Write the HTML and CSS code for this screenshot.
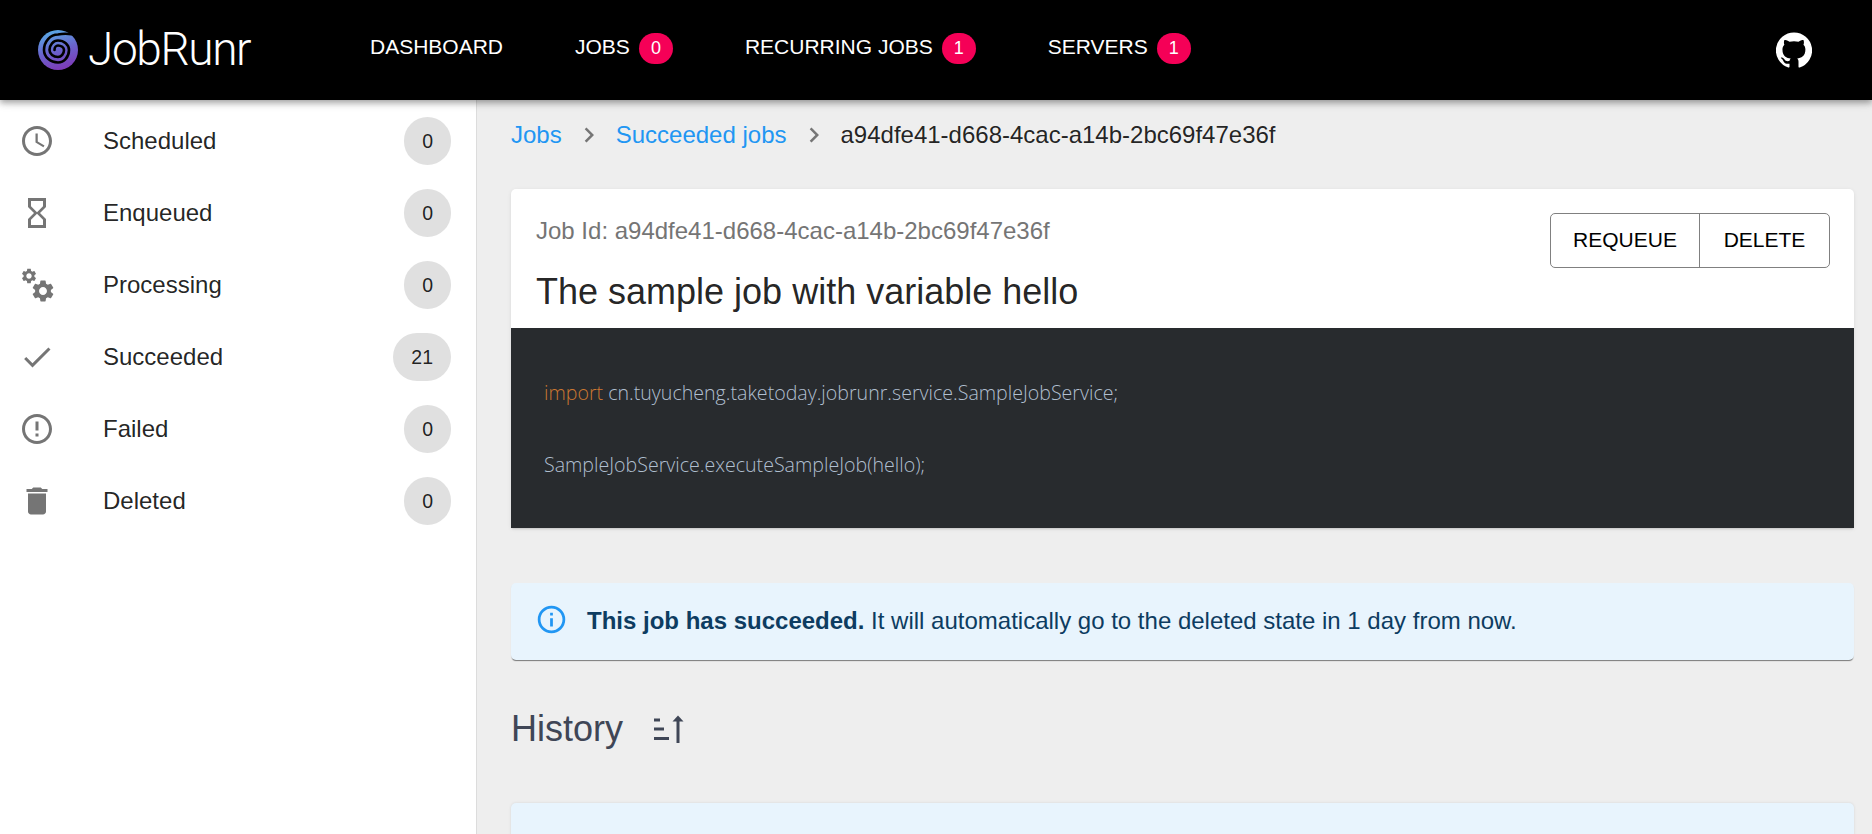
FILE: index.html
```html
<!DOCTYPE html>
<html lang="en">
<head>
<meta charset="utf-8">
<title>JobRunr</title>
<link rel="stylesheet" href="styles.css">
</head>
<body>
<header class="appbar">
  <a class="logo">
    <svg class="logo-mark" viewBox="0 0 40 40">
      <defs><linearGradient id="lg" x1="0.2" y1="0" x2="0.5" y2="1"><stop offset="0" stop-color="#58b0e8"/><stop offset="0.55" stop-color="#6a62cc"/><stop offset="1" stop-color="#7d3cb8"/></linearGradient></defs>
      <circle cx="20" cy="20" r="20" fill="url(#lg)"/>
      <path class="logo-cut" d="M42 6 Q30 2.6 20 4.5 A14 15.5 0 0 0 6 20 A14 12.5 0 0 0 20 32.5 A11 12.5 0 0 0 31 20 A11 9.5 0 0 0 20 10.5 A8.5 9.5 0 0 0 11.5 20 A8.5 7 0 0 0 20 27 A6 7 0 0 0 26 20 A6 4.5 0 0 0 20 15.5 A3.5 4.5 0 0 0 16.5 20"/>
    </svg>
    <span class="logo-text">JobRunr</span>
  </a>
  <nav class="nav">
    <a class="nav-item">DASHBOARD</a>
    <a class="nav-item">JOBS <span class="nav-badge">0</span></a>
    <a class="nav-item">RECURRING JOBS <span class="nav-badge">1</span></a>
    <a class="nav-item">SERVERS <span class="nav-badge">1</span></a>
  </nav>
  <a class="github">
    <svg viewBox="0 0 24 24"><path d="M12 .3a12 12 0 0 0-3.8 23.4c.6.1.8-.3.8-.6v-2c-3.3.7-4-1.6-4-1.6-.6-1.4-1.4-1.8-1.4-1.8-1-.7.1-.7.1-.7 1.2 0 1.9 1.2 1.9 1.2 1 1.8 2.8 1.3 3.5 1 0-.8.4-1.3.7-1.6-2.7-.3-5.5-1.3-5.5-6 0-1.2.5-2.3 1.3-3.1-.2-.4-.6-1.6 0-3.2 0 0 1-.3 3.4 1.2a11.5 11.5 0 0 1 6 0c2.3-1.5 3.3-1.2 3.3-1.2.6 1.6.2 2.8 0 3.2.9.8 1.3 1.9 1.3 3.2 0 4.6-2.8 5.6-5.5 5.9.5.4.9 1 .9 2.2v3.3c0 .3.1.7.8.6A12 12 0 0 0 12 .3"/></svg>
  </a>
</header>
<div class="shell">
  <aside class="drawer">
    <ul class="menu">
      <li class="menu-item">
        <svg class="menu-icon" viewBox="0 0 24 24"><path d="M11.99 2C6.47 2 2 6.48 2 12s4.47 10 9.99 10C17.52 22 22 17.52 22 12S17.52 2 11.99 2zM12 20c-4.42 0-8-3.58-8-8s3.58-8 8-8 8 3.58 8 8-3.58 8-8 8zm.5-13H11v6l5.25 3.15.75-1.23-4.5-2.67z"/></svg>
        <span class="menu-label">Scheduled</span><span class="count">0</span>
      </li>
      <li class="menu-item">
        <svg class="menu-icon" viewBox="0 0 24 24"><path d="M6 2v6h.01L6 8.01 10 12l-4 4 .01.01H6V22h12v-5.99h-.01L18 16l-4-4 4-3.99-.01-.01H18V2H6zm10 14.5V20H8v-3.5l4-4 4 4zm-4-5l-4-4V4h8v3.5l-4 4z"/></svg>
        <span class="menu-label">Enqueued</span><span class="count">0</span>
      </li>
      <li class="menu-item">
        <svg class="menu-icon" viewBox="0 0 36 36">
          <path transform="translate(10.8 10.8) scale(1.1)" d="M19.14 12.94c.04-.3.06-.61.06-.94 0-.32-.02-.64-.07-.94l2.03-1.58c.18-.14.23-.41.12-.61l-1.92-3.32c-.12-.22-.37-.29-.59-.22l-2.39.96c-.5-.38-1.03-.7-1.62-.94l-.36-2.54c-.04-.24-.24-.41-.48-.41h-3.84c-.24 0-.43.17-.47.41l-.36 2.54c-.59.24-1.13.57-1.62.94l-2.39-.96c-.22-.08-.47 0-.59.22L2.74 8.87c-.12.21-.08.47.12.61l2.03 1.58c-.05.3-.09.63-.09.94s.02.64.07.94l-2.03 1.58c-.18.14-.23.41-.12.61l1.92 3.32c.12.22.37.29.59.22l2.39-.96c.5.38 1.03.7 1.62.94l.36 2.54c.05.24.24.41.48.41h3.84c.24 0 .44-.17.47-.41l.36-2.54c.59-.24 1.13-.56 1.62-.94l2.39.96c.22.08.47 0 .59-.22l1.92-3.32c.12-.22.07-.47-.12-.61l-2.01-1.58zM12 15.6c-1.98 0-3.6-1.62-3.6-3.6s1.62-3.6 3.6-3.6 3.6 1.62 3.6 3.6-1.62 3.6-3.6 3.6z"/>
          <path transform="translate(1 0) scale(.75)" d="M19.14 12.94c.04-.3.06-.61.06-.94 0-.32-.02-.64-.07-.94l2.03-1.58c.18-.14.23-.41.12-.61l-1.92-3.32c-.12-.22-.37-.29-.59-.22l-2.39.96c-.5-.38-1.03-.7-1.62-.94l-.36-2.54c-.04-.24-.24-.41-.48-.41h-3.84c-.24 0-.43.17-.47.41l-.36 2.54c-.59.24-1.13.57-1.62.94l-2.39-.96c-.22-.08-.47 0-.59.22L2.74 8.87c-.12.21-.08.47.12.61l2.03 1.58c-.05.3-.09.63-.09.94s.02.64.07.94l-2.03 1.58c-.18.14-.23.41-.12.61l1.92 3.32c.12.22.37.29.59.22l2.39-.96c.5.38 1.03.7 1.62.94l.36 2.54c.05.24.24.41.48.41h3.84c.24 0 .44-.17.47-.41l.36-2.54c.59-.24 1.13-.56 1.62-.94l2.39.96c.22.08.47 0 .59-.22l1.92-3.32c.12-.22.07-.47-.12-.61l-2.01-1.58zM12 15.6c-1.98 0-3.6-1.62-3.6-3.6s1.62-3.6 3.6-3.6 3.6 1.62 3.6 3.6-1.62 3.6-3.6 3.6z"/>
        </svg>
        <span class="menu-label">Processing</span><span class="count">0</span>
      </li>
      <li class="menu-item">
        <svg class="menu-icon" viewBox="0 0 24 24"><path d="M9 16.17L4.83 12l-1.42 1.41L9 19 21 7l-1.41-1.41z"/></svg>
        <span class="menu-label">Succeeded</span><span class="count">21</span>
      </li>
      <li class="menu-item">
        <svg class="menu-icon" viewBox="0 0 24 24"><path d="M11 15h2v2h-2zm0-8h2v6h-2zm.99-5C6.47 2 2 6.48 2 12s4.47 10 9.99 10C17.52 22 22 17.52 22 12S17.52 2 11.99 2zM12 20c-4.42 0-8-3.58-8-8s3.58-8 8-8 8 3.58 8 8-3.58 8-8 8z"/></svg>
        <span class="menu-label">Failed</span><span class="count">0</span>
      </li>
      <li class="menu-item">
        <svg class="menu-icon" viewBox="0 0 24 24"><path d="M6 19c0 1.1.9 2 2 2h8c1.1 0 2-.9 2-2V7H6v12zM19 4h-3.5l-1-1h-5l-1 1H5v2h14V4z"/></svg>
        <span class="menu-label">Deleted</span><span class="count">0</span>
      </li>
    </ul>
  </aside>
  <main class="main">
    <nav class="crumbs">
      <a class="crumb-link">Jobs</a>
      <svg class="crumb-sep" viewBox="0 0 24 24"><path d="M10 6L8.59 7.41 13.17 12l-4.58 4.59L10 18l6-6z"/></svg>
      <a class="crumb-link">Succeeded jobs</a>
      <svg class="crumb-sep" viewBox="0 0 24 24"><path d="M10 6L8.59 7.41 13.17 12l-4.58 4.59L10 18l6-6z"/></svg>
      <span class="crumb-current">a94dfe41-d668-4cac-a14b-2bc69f47e36f</span>
    </nav>
    <section class="card">
      <div class="card-head">
        <div class="card-titles">
          <div class="job-id">Job Id: a94dfe41-d668-4cac-a14b-2bc69f47e36f</div>
          <h1 class="job-title">The sample job with variable hello</h1>
        </div>
        <div class="btn-group">
          <button class="btn btn-requeue">REQUEUE</button>
          <button class="btn btn-delete">DELETE</button>
        </div>
      </div>
      <div class="code">
        <div class="code-line"><span class="kw">import</span> cn.tuyucheng.taketoday.jobrunr.service.SampleJobService;</div>
        <div class="code-line">SampleJobService.executeSampleJob(hello);</div>
      </div>
    </section>
    <div class="alert">
      <svg class="alert-icon" viewBox="0 0 24 24"><path d="M11,9H13V7H11V9M12,20C7.59,20 4,16.41 4,12C4,7.59 7.59,4 12,4C16.41,4 20,7.59 20,12C20,16.41 16.41,20 12,20M12,2A10,10 0 0,0 2,12A10,10 0 0,0 12,22A10,10 0 0,0 22,12A10,10 0 0,0 12,2M11,17H13V11H11V17Z"/></svg>
      <div class="alert-text"><strong>This job has succeeded.</strong> It will automatically go to the deleted state in 1 day from now.</div>
    </div>
    <div class="history">
      <h2 class="history-title">History</h2>
      <svg class="sort-icon" viewBox="0 0 31 28">
        <rect x="1" y="3.5" width="6" height="3"/>
        <rect x="1" y="12.5" width="10" height="3"/>
        <rect x="1" y="22" width="15" height="3"/>
        <rect x="23.5" y="3" width="3" height="25"/>
        <path d="M25 0.5 L30.5 6.5 H19.5 Z"/>
      </svg>
    </div>
    <div class="alert-next"></div>
  </main>
</div>
</body>
</html>
```
FILE: styles.css
```css
* { box-sizing: border-box; }
html, body { margin: 0; height: 834px; overflow: hidden; }
body { font-family: "Liberation Sans", Arial, sans-serif; font-size: 24px; color: rgba(0,0,0,.87); background: #eeeeee; }

.appbar { position: relative; z-index: 2; height: 100px; background: #000; color: #fff; display: flex; align-items: center; padding: 0 60px 0 38px; box-shadow: 0 3px 6px rgba(0,0,0,.3), 0 1px 12px rgba(0,0,0,.12); }
.logo { display: flex; align-items: center; width: 332px; flex: none; }
.logo-mark { width: 40px; height: 40px; flex: none; }
.logo-cut { fill: none; stroke: #000; stroke-width: 2.6; stroke-linecap: round; }
.logo-text { margin-left: 10px; font-family: Roboto, sans-serif; font-weight: 300; font-size: 46px; letter-spacing: -1.4px; line-height: 1; margin-top: -2px; }
.nav { display: flex; align-items: center; gap: 72px; margin-top: -6px; }
.nav-item { display: flex; align-items: center; gap: 9px; font-size: 21px; white-space: nowrap; }
.nav-badge { display: flex; align-items: center; justify-content: center; width: 34px; height: 31px; margin-top: 3px; border-radius: 16px; background: #f50057; color: #fff; font-size: 18px; }
.github { margin-left: auto; width: 36px; height: 36px; flex: none; }
.github svg { display: block; width: 36px; height: 36px; fill: #fff; }

.shell { display: flex; height: 734px; }
.drawer { width: 477px; flex: none; background: #fff; border-right: 1px solid #dcdcdc; padding-top: 5px; }
.menu { list-style: none; margin: 0; padding: 0; }
.menu-item { display: flex; align-items: center; height: 72px; padding: 0 25px 0 19px; }
.menu-icon { width: 36px; height: 36px; flex: none; fill: #757575; }
.menu-label { margin-left: 48px; flex: 1; }
.count { height: 48px; padding: 0 18px; border-radius: 24px; background: #e0e0e0; display: flex; align-items: center; justify-content: center; font-size: 19.5px; }

.main { flex: 1; min-width: 0; padding: 20px 18px 0 34px; }
.crumbs { display: flex; align-items: center; height: 30px; }
.crumb-link { color: #2196f3; }
.crumb-sep { width: 30px; height: 30px; fill: #757575; margin: 0 12px; }
.crumb-current { color: rgba(0,0,0,.87); }

.card { margin-top: 39px; background: #fff; border-radius: 5px 5px 0 0; box-shadow: 0 2px 2px -1px rgba(0,0,0,.12), 0 1px 4px rgba(0,0,0,.08); }
.card-head { height: 139px; display: flex; justify-content: space-between; padding: 24px 24px 0 25px; }
.job-id { margin-top: 3px; line-height: 30px; color: #757575; }
.job-title { margin: 26px 0 0; font-size: 36px; font-weight: 400; line-height: 40px; }
.btn-group { display: flex; height: 55px; border: 1px solid #808080; border-radius: 5px; }
.btn { font: inherit; font-size: 21px; color: #000; background: none; border: 0; padding: 0 0 2px; height: 100%; cursor: pointer; }
.btn-requeue { width: 149px; border-right: 1px solid #808080; }
.btn-delete { width: 129px; }
.code { height: 200px; background: #282b2e; color: #b0bfd0; padding: 29px 33px 27px; font-family: "Open Sans", sans-serif; font-weight: 300; font-size: 19.6px; }
.code-line { height: 72px; line-height: 72px; white-space: pre; }
.kw { color: #cc7832; }

.alert { margin-top: 55px; height: 77px; display: flex; align-items: center; padding-left: 24px; background: #e8f4fd; color: #0d3c61; border-radius: 5px; box-shadow: 0 2px 1px -1px rgba(0,0,0,.4), 0 1px 1px rgba(0,0,0,.14); }
.alert-icon { width: 33px; height: 33px; flex: none; fill: #2196f3; margin-top: -4px; }
.alert-text { margin: -2px 0 0 19px; }

.history { display: flex; align-items: center; margin-top: 47px; height: 44px; }
.history-title { margin: 0; font-size: 36px; font-weight: 400; line-height: 44px; color: #3f4656; }
.sort-icon { width: 31px; height: 28px; margin-left: 30px; fill: #3f4656; }
.alert-next { margin-top: 52px; height: 100px; background: #e8f4fd; border-radius: 5px; box-shadow: 0 0 3px rgba(0,0,0,.1); }
```
